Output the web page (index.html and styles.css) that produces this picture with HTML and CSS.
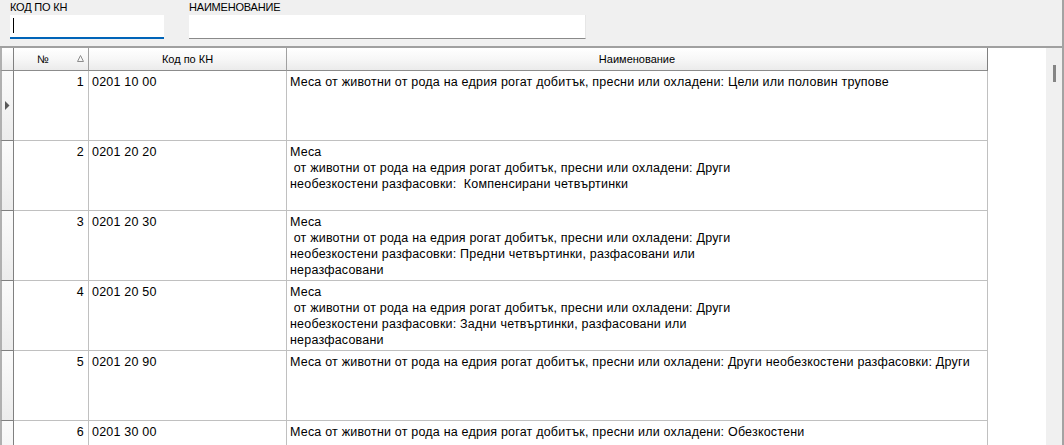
FILE: index.html
```html
<!DOCTYPE html>
<html lang="bg">
<head>
<meta charset="utf-8">
<title>Код по КН</title>
<link rel="stylesheet" href="styles.css">
</head>
<body>
<div class="app">
  <div class="filters">
    <div class="field field-code">
      <label class="field-label">КОД ПО КН</label>
      <div class="input input-active"><span class="caret"></span></div>
    </div>
    <div class="field field-name">
      <label class="field-label">НАИМЕНОВАНИЕ</label>
      <div class="input"></div>
    </div>
  </div>
  <div class="grid">
    <div class="grid-area">
      <div class="row head">
        <div class="ind"></div>
        <div class="hc c-no"><span class="hc-text">№</span><span class="sort"><svg width="7" height="7" viewBox="0 0 7 7"><polygon points="3.5,0.5 6.5,6.5 0.5,6.5" fill="none" stroke="#8c8c8c" stroke-width="1"/></svg></span></div>
        <div class="hc c-code">Код по КН</div>
        <div class="hc c-name">Наименование</div>
      </div>
      <div class="row">
        <div class="ind"><svg class="arrow" width="5" height="9" viewBox="0 0 5 9"><polygon points="0,0 4.5,4.5 0,9" fill="#5a5a5a"/></svg></div>
        <div class="cell c-no">1</div>
        <div class="cell c-code">0201 10 00</div>
        <div class="cell c-name">Меса от животни от рода на едрия рогат добитък, пресни или охладени: Цели или половин трупове</div>
      </div>
      <div class="row">
        <div class="ind"></div>
        <div class="cell c-no">2</div>
        <div class="cell c-code">0201 20 20</div>
        <div class="cell c-name">Меса
 от животни от рода на едрия рогат добитък, пресни или охладени: Други
необезкостени разфасовки:  Компенсирани четвъртинки</div>
      </div>
      <div class="row">
        <div class="ind"></div>
        <div class="cell c-no">3</div>
        <div class="cell c-code">0201 20 30</div>
        <div class="cell c-name">Меса
 от животни от рода на едрия рогат добитък, пресни или охладени: Други
необезкостени разфасовки: Предни четвъртинки, разфасовани или
неразфасовани</div>
      </div>
      <div class="row">
        <div class="ind"></div>
        <div class="cell c-no">4</div>
        <div class="cell c-code">0201 20 50</div>
        <div class="cell c-name">Меса
 от животни от рода на едрия рогат добитък, пресни или охладени: Други
необезкостени разфасовки: Задни четвъртинки, разфасовани или
неразфасовани</div>
      </div>
      <div class="row">
        <div class="ind"></div>
        <div class="cell c-no">5</div>
        <div class="cell c-code">0201 20 90</div>
        <div class="cell c-name">Меса от животни от рода на едрия рогат добитък, пресни или охладени: Други необезкостени разфасовки: Други</div>
      </div>
      <div class="row">
        <div class="ind"></div>
        <div class="cell c-no">6</div>
        <div class="cell c-code">0201 30 00</div>
        <div class="cell c-name">Меса от животни от рода на едрия рогат добитък, пресни или охладени: Обезкостени</div>
      </div>
    </div>
    <div class="vscroll"><div class="thumb"></div></div>
  </div>
</div>
</body>
</html>
```
FILE: styles.css
```css
html, body {
  margin: 0;
  padding: 0;
  background: #f0f0f0;
  overflow: hidden;
}
.app {
  width: 1064px;
  height: 445px;
  box-sizing: border-box;
  border-right: 2px solid #a3a3a3;
  display: flex;
  flex-direction: column;
  font-family: "Liberation Sans", Arial, sans-serif;
  color: #000;
  overflow: hidden;
}
.filters {
  height: 46px;
  box-sizing: border-box;
  padding: 1px 0 0 10px;
  display: flex;
  gap: 25px;
  background: #f0f0f0;
  flex: none;
}
.field {
  display: flex;
  flex-direction: column;
}
.field-code { width: 154px; }
.field-name { width: 397px; }
.field-label {
  font-size: 11px;
  line-height: 13px;
  height: 14px;
  color: #000;
  letter-spacing: -0.2px;
}
.input {
  height: 24px;
  box-sizing: border-box;
  background: #fff;
  border-bottom: 1px solid #8a8a8a;
  border-right: 1px solid #e6e6e6;
  position: relative;
}
.input-active {
  border-bottom: 2px solid #0064b8;
  border-right: none;
}
.caret {
  position: absolute;
  left: 3px;
  top: 3px;
  width: 1px;
  height: 15px;
  background: #000;
}
.grid {
  flex: 1;
  display: flex;
  border-top: 2px solid #a0a0a0;
  min-height: 0;
}
.grid-area {
  flex: 1;
  background: #fff;
  overflow: hidden;
}
.row {
  display: flex;
  width: 988px;
  height: 70px;
}
.row.head {
  height: 23px;
}
.ind {
  width: 14px;
  flex: none;
  box-sizing: border-box;
  border-left: 2px solid #b0b0b0;
  border-right: 1px solid #808080;
  border-bottom: 1px solid #808080;
  background: linear-gradient(#fbfbfb, #ececec);
  display: flex;
  align-items: center;
  padding-left: 3px;
}
.head .ind {
  border-bottom-color: #8c8c8c;
  background: linear-gradient(#ffffff, #ececec);
}
.c-no { width: 75px; }
.c-code { width: 198px; }
.c-name { width: 701px; }
.hc, .cell {
  flex: none;
  box-sizing: border-box;
  overflow: hidden;
}
.hc {
  font-size: 11px;
  line-height: 22px;
  text-align: center;
  background: linear-gradient(#ffffff 0%, #f7f7f7 50%, #ebebeb 100%);
  border-right: 1px solid #a0a0a0;
  border-bottom: 1px solid #8c8c8c;
  white-space: nowrap;
}
.hc.c-no {
  display: flex;
}
.hc-text {
  flex: 1;
  text-align: center;
}
.sort {
  width: 16px;
  display: flex;
  align-items: center;
  justify-content: center;
  padding-bottom: 2px;
}
.hc.c-name {
  border-right-color: #808080;
}
.cell {
  font-size: 12.5px;
  letter-spacing: 0.2px;
  line-height: 16px;
  padding: 3px 3px 0 3px;
  border-right: 1px solid #c0c0c0;
  border-bottom: 1px solid #c0c0c0;
  white-space: pre-wrap;
}
.cell.c-no {
  text-align: right;
  padding-right: 4px;
}
.vscroll {
  width: 16px;
  flex: none;
  background: #f0f0f0;
  position: relative;
}
.thumb {
  position: absolute;
  left: 7px;
  top: 17px;
  width: 3px;
  height: 17px;
  background: #858585;
}
```
